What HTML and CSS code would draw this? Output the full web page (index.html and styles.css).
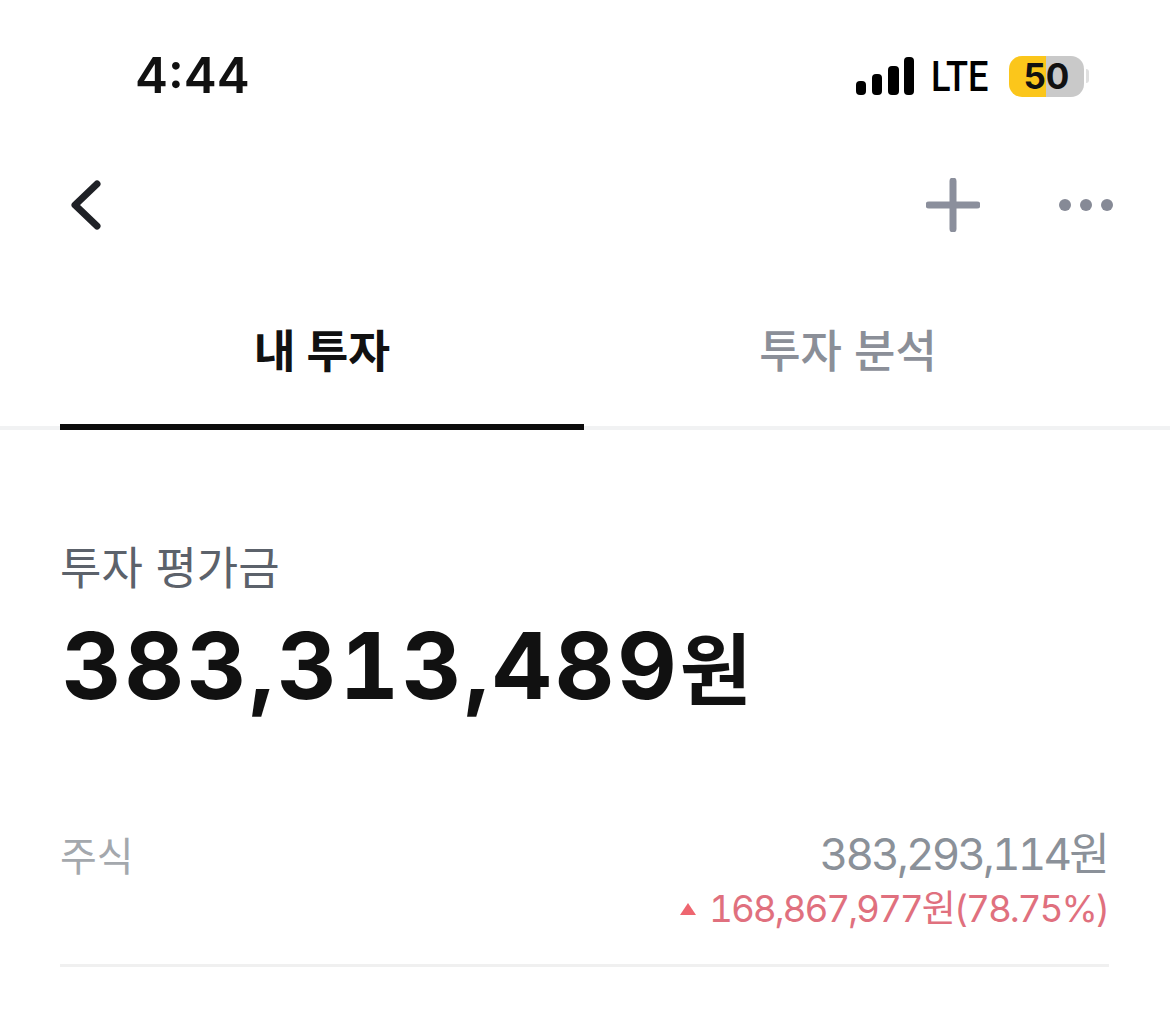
FILE: index.html
```html
<!DOCTYPE html>
<html lang="ko">
<head>
<meta charset="utf-8">
<title>내 투자</title>
<link rel="stylesheet" href="styles.css">
</head>
<body>
<div class="status">
  <span class="time">4:44</span>
  <div class="status-right">
    <svg class="signal" width="58" height="38" viewBox="0 0 58 38"><g fill="#000"><rect x="0" y="24" width="10" height="14" rx="4"/><rect x="16" y="17" width="10" height="21" rx="4"/><rect x="32" y="9" width="11" height="29" rx="4"/><rect x="48" y="0" width="10" height="38" rx="4"/></g></svg>
    <span class="lte">LTE</span>
    <div class="battery"><span class="battery-text">50</span></div>
    <span class="battery-cap"></span>
  </div>
</div>
<div class="nav">
  <svg class="back" width="32" height="50" viewBox="0 0 32 50"><path d="M27 4 L5 25 L27 46" fill="none" stroke="#1f2126" stroke-width="7" stroke-linecap="round" stroke-linejoin="round"/></svg>
  <div class="nav-right">
    <svg width="54" height="54" viewBox="0 0 54 54"><path d="M27 3V51M3 27H51" fill="none" stroke="#8b8f9c" stroke-width="7" stroke-linecap="round"/></svg>
    <svg width="56" height="14" viewBox="0 0 56 14"><g fill="#868a96"><circle cx="7" cy="7" r="6"/><circle cx="28" cy="7" r="6"/><circle cx="49" cy="7" r="6"/></g></svg>
  </div>
</div>
<div class="tabs">
  <div class="tab active">내 투자</div>
  <div class="tab second">투자 분석</div>
</div>
<div class="summary">
  <div class="label">투자 평가금</div>
  <div class="amount">383,313,489<span class="unit">원</span></div>
</div>
<div class="row">
  <div class="row-name">주식</div>
  <div class="row-values">
    <div class="value">383,293,114원</div>
    <div class="gain"><span class="arrow"></span>168,867,977원(78.75%)</div>
  </div>
</div>
</body>
</html>
```
FILE: styles.css
```css
* { box-sizing: border-box; }
html, body { margin: 0; padding: 0; }
body {
  width: 1170px;
  height: 1010px;
  overflow: hidden;
  background: #fff;
  font-family: Inter, "Noto Sans CJK KR", sans-serif;
  color: #111;
}
.status {
  height: 150px;
  padding: 42px 81px 0 135px;
  display: flex;
  justify-content: space-between;
  align-items: flex-start;
}
.time { font-size: 49.5px; line-height: 66px; font-weight: 600; color: #111; }
.status-right { display: flex; align-items: center; height: 68px; }
.signal { margin-right: 17px; }
.lte { font-size: 42px; font-weight: 500; font-family: Roboto, sans-serif; color: #000; width: 61px; margin-right: 17px; transform: scaleX(.86); transform-origin: left; white-space: nowrap; }
.battery {
  width: 75px; height: 41px; border-radius: 13px;
  background: linear-gradient(90deg, #fbc61b 0, #fbc61b 50%, #c9c9c9 50%, #c9c9c9 100%);
  display: flex; align-items: center; justify-content: center;
}
.battery-text { font-size: 35px; font-weight: 700; color: #111; }
.battery-cap { width: 3px; height: 14px; margin-left: 2px; background: #e0e0e0; border-radius: 0 4px 4px 0; }
.nav {
  height: 110px;
  padding: 0 56px 0 70px;
  display: flex;
  justify-content: space-between;
  align-items: center;
}
.nav-right { display: flex; align-items: center; gap: 78px; }
.tabs {
  height: 170px;
  display: flex;
  border-bottom: 4px solid #f1f2f3;
}
.tab {
  width: 524px;
  height: 170px;
  text-align: center;
  font-size: 45px;
  font-weight: 500;
  line-height: 184px;
  color: #8b8f98;
}
.tab:first-child { margin-left: 60px; }
.tab.second { padding-left: 4px; }
.tab.active { color: #111; font-weight: 700; border-bottom: 6px solid #0c0c0c; font-size: 45.5px; }
.summary { padding: 108px 59px 0 60px; }
.label { font-size: 45px; line-height: 62px; color: #5c626b; }
.amount { font-size: 92px; line-height: 106px; font-weight: 700; color: #111; margin-top: 13px; padding-left: 2px; letter-spacing: 3px; font-variant-numeric: tabular-nums; }
.unit { font-size: 78px; letter-spacing: 0; }
.row {
  margin: 100px 61px 0 60px;
  padding-bottom: 30px;
  display: flex;
  justify-content: space-between;
  border-bottom: 3px solid #f0f0f0;
}
.row-name { font-size: 40px; line-height: 60px; color: #a4a8ad; padding-top: 3px; }
.row-values { text-align: right; }
.value { font-size: 44px; line-height: 60px; color: #8b9199; font-variant-numeric: tabular-nums; letter-spacing: -2.8px; padding-right: 2px; }
.gain { font-size: 37px; line-height: 50px; color: #e0707e; display: flex; align-items: center; justify-content: flex-end; font-variant-numeric: tabular-nums; letter-spacing: -2.1px; padding-right: 1px; }
.arrow {
  width: 0; height: 0; margin-right: 13px;
  border-left: 8px solid transparent;
  border-right: 8px solid transparent;
  border-bottom: 12px solid #ee6670;
}
```
